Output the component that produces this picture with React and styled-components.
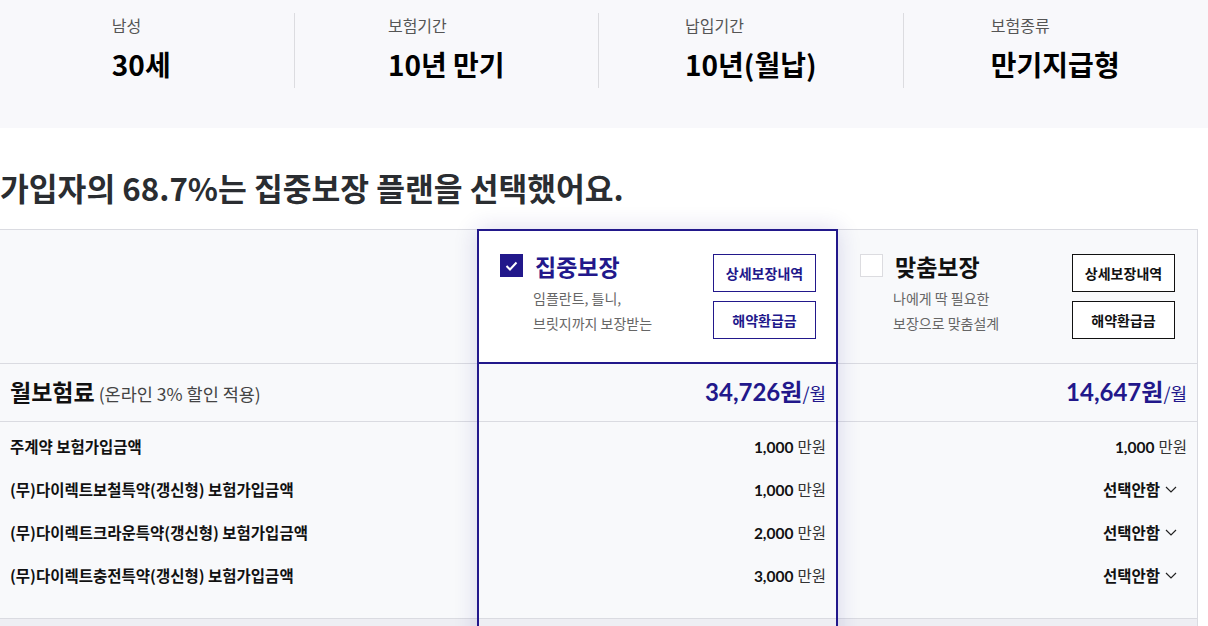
import styled, { createGlobalStyle } from "styled-components";

const GlobalStyle = createGlobalStyle`
    body {
        margin: 0;
        background: #ffffff;
        overflow-x: hidden;
        font-family: "Noto Sans CJK KR", "Noto Sans", sans-serif;
        color: #111;
    }
`;

const INDIGO = "#22188b";
const LINE = "#dadbe1";

const Summary = styled.div`
    background: #f8f8fb;
    height: 128px;
    box-sizing: border-box;
    padding-top: 13px;
`;

const SummaryGrid = styled.div`
    width: 1218px;
    margin-left: -11px;
    display: grid;
    grid-template-columns: repeat(4, 1fr);
`;

const SummaryItem = styled.div`
    height: 75px;
    display: flex;
    justify-content: center;
    border-left: ${(p) => (p.$first ? "none" : "1px solid #dcdce0")};
`;

const SummaryText = styled.div`
    padding-top: 1px;

    & span {
        display: block;
        font-size: 16px;
        line-height: 22px;
        color: #555;
    }

    & strong {
        display: block;
        margin-top: 10px;
        font-size: 28px;
        line-height: 36px;
        font-weight: 700;
        color: #000;
    }
`;

const Heading = styled.h2`
    margin: 40px 0 21px;
    font-size: 31.3px;
    line-height: 40px;
    font-weight: 700;
    color: #2a2d31;
    white-space: nowrap;
`;

const Table = styled.div`
    width: 1198px;
    display: flex;
    background: #f8f9fb;
    border-top: 1px solid ${LINE};
    border-right: 1px solid ${LINE};
    box-sizing: border-box;
`;

const Column = styled.div`
    display: flex;
    flex-direction: column;
    ${(p) =>
        p.$picked
            ? `
        width: 361px;
        box-sizing: border-box;
        margin-top: -1px;
        border: 2px solid ${INDIGO};
        border-bottom: none;
        box-shadow: 0 0 22px rgba(40, 30, 140, 0.16);
        position: relative;
        z-index: 1;
    `
            : p.$label
            ? `width: 477px;`
            : `flex: 1;`}
`;

const HeadCell = styled.div`
    height: ${(p) => (p.$picked ? "133px" : "134px")};
    box-sizing: border-box;
    padding: ${(p) => (p.$picked ? "23px 20px 0 21px" : "24px 22px 0 22px")};
    display: flex;
    justify-content: space-between;
    background: ${(p) => (p.$picked ? "#fff" : "transparent")};
    border-bottom: ${(p) => (p.$picked ? `2px solid ${INDIGO}` : `1px solid ${LINE}`)};
`;

const PlanInfo = styled.div`
    display: flex;
    gap: 12px;
`;

const Check = styled.span`
    width: 23px;
    height: 23px;
    box-sizing: border-box;
    display: flex;
    align-items: center;
    justify-content: center;
    background: ${(p) => (p.$on ? INDIGO : "#fff")};
    border: 1px solid ${(p) => (p.$on ? INDIGO : "#dcdce0")};
`;

const PlanTitle = styled.div`
    font-size: 23px;
    line-height: 24px;
    font-weight: 700;
    color: ${(p) => (p.$picked ? INDIGO : "#111")};
`;

const PlanSub = styled.p`
    margin: 8px 0 0 -2px;
    font-size: 14px;
    line-height: 25px;
    color: #666;
`;

const Buttons = styled.div`
    display: flex;
    flex-direction: column;
    gap: 9px;
`;

const Btn = styled.button`
    width: 103px;
    height: 38px;
    background: #fff;
    border: 1px solid ${(p) => (p.$picked ? INDIGO : "#111")};
    color: ${(p) => (p.$picked ? INDIGO : "#111")};
    font-family: inherit;
    font-size: 14px;
    font-weight: 700;
    padding: 0;
    cursor: pointer;
`;

const PriceCell = styled.div`
    height: 58px;
    box-sizing: border-box;
    border-bottom: 1px solid ${LINE};
    display: flex;
    align-items: center;
    justify-content: ${(p) => (p.$label ? "flex-start" : "flex-end")};
    padding: ${(p) => (p.$label ? "0 0 4px 10px" : "0 10px 4px 0")};
`;

const PriceLabel = styled.div`
    font-size: 23px;
    font-weight: 700;
    color: #111;

    & span {
        font-size: 17.5px;
        font-weight: 400;
        color: #444;
        margin-left: 4px;
    }
`;

const Price = styled.div`
    color: ${INDIGO};
    font-family: Lato, "Noto Sans CJK KR", sans-serif;
    font-size: 24px;
    font-weight: 700;

    & span {
        font-family: "Noto Sans CJK KR", sans-serif;
        font-size: 18px;
        font-weight: 400;
    }
`;

const RowsCell = styled.div`
    height: 197px;
    box-sizing: border-box;
    border-bottom: 1px solid ${LINE};
    padding: 9px ${(p) => (p.$label ? "0 0 10px" : "10px 0 0")};
    display: flex;
    flex-direction: column;
    gap: 13px;
`;

const Row = styled.div`
    height: 30px;
    display: flex;
    align-items: center;
    justify-content: ${(p) => (p.$label ? "flex-start" : "flex-end")};
    font-size: 15.5px;
    font-weight: 700;
    color: #111;
`;

const Amount = styled.span`
    font-family: Lato, "Noto Sans CJK KR", sans-serif;
    font-weight: 700;

    & em {
        font-style: normal;
        font-family: "Noto Sans CJK KR", sans-serif;
        font-weight: 400;
        color: #333;
        margin-left: 4px;
    }
`;

const Dropdown = styled.span`
    display: flex;
    align-items: center;
    gap: 5px;
    margin-right: 10px;
`;

const Tail = styled.div`
    height: 40px;
    background: #eeeef3;
`;

const summary = [
    ["남성", "30세"],
    ["보험기간", "10년 만기"],
    ["납입기간", "10년(월납)"],
    ["보험종류", "만기지급형"],
];

const labels = [
    "주계약 보험가입금액",
    "(무)다이렉트보철특약(갱신형) 보험가입금액",
    "(무)다이렉트크라운특약(갱신형) 보험가입금액",
    "(무)다이렉트충전특약(갱신형) 보험가입금액",
];

const pickedAmounts = ["1,000", "1,000", "2,000", "3,000"];

function Chevron() {
    return (
        <svg width="12" height="7" viewBox="0 0 12 7" fill="none">
            <polyline points="1,1 6,6 11,1" stroke="#222" strokeWidth="1.2" />
        </svg>
    );
}

function Tick() {
    return (
        <svg width="13" height="10" viewBox="0 0 13 10" fill="none">
            <polyline points="1.5,5 5,8.5 11.5,1.5" stroke="#fff" strokeWidth="2" />
        </svg>
    );
}

function PlanHead({ picked, title, lines }) {
    return (
        <HeadCell $picked={picked}>
            <PlanInfo>
                <Check $on={picked}>{picked && <Tick />}</Check>
                <div>
                    <PlanTitle $picked={picked}>{title}</PlanTitle>
                    <PlanSub>
                        {lines[0]}
                        <br />
                        {lines[1]}
                    </PlanSub>
                </div>
            </PlanInfo>
            <Buttons>
                <Btn $picked={picked}>상세보장내역</Btn>
                <Btn $picked={picked}>해약환급금</Btn>
            </Buttons>
        </HeadCell>
    );
}

export default function App() {
    return (
        <>
            <GlobalStyle />
            <Summary>
                <SummaryGrid>
                    {summary.map(([k, v], i) => (
                        <SummaryItem key={k} $first={i === 0}>
                            <SummaryText>
                                <span>{k}</span>
                                <strong>{v}</strong>
                            </SummaryText>
                        </SummaryItem>
                    ))}
                </SummaryGrid>
            </Summary>

            <Heading>가입자의 68.7%는 집중보장 플랜을 선택했어요.</Heading>

            <Table>
                <Column $label>
                    <HeadCell />
                    <PriceCell $label>
                        <PriceLabel>
                            월보험료<span>(온라인 3% 할인 적용)</span>
                        </PriceLabel>
                    </PriceCell>
                    <RowsCell $label>
                        {labels.map((l) => (
                            <Row $label key={l}>
                                {l}
                            </Row>
                        ))}
                    </RowsCell>
                    <Tail />
                </Column>

                <Column $picked>
                    <PlanHead picked title="집중보장" lines={["임플란트, 틀니,", "브릿지까지 보장받는"]} />
                    <PriceCell>
                        <Price>
                            34,726원<span>/월</span>
                        </Price>
                    </PriceCell>
                    <RowsCell>
                        {pickedAmounts.map((a, i) => (
                            <Row key={i}>
                                <Amount>
                                    {a}
                                    <em>만원</em>
                                </Amount>
                            </Row>
                        ))}
                    </RowsCell>
                    <Tail />
                </Column>

                <Column>
                    <PlanHead title="맞춤보장" lines={["나에게 딱 필요한", "보장으로 맞춤설계"]} />
                    <PriceCell>
                        <Price>
                            14,647원<span>/월</span>
                        </Price>
                    </PriceCell>
                    <RowsCell>
                        <Row>
                            <Amount>
                                1,000<em>만원</em>
                            </Amount>
                        </Row>
                        {[1, 2, 3].map((i) => (
                            <Row key={i}>
                                <Dropdown>
                                    선택안함
                                    <Chevron />
                                </Dropdown>
                            </Row>
                        ))}
                    </RowsCell>
                    <Tail />
                </Column>
            </Table>
        </>
    );
}
